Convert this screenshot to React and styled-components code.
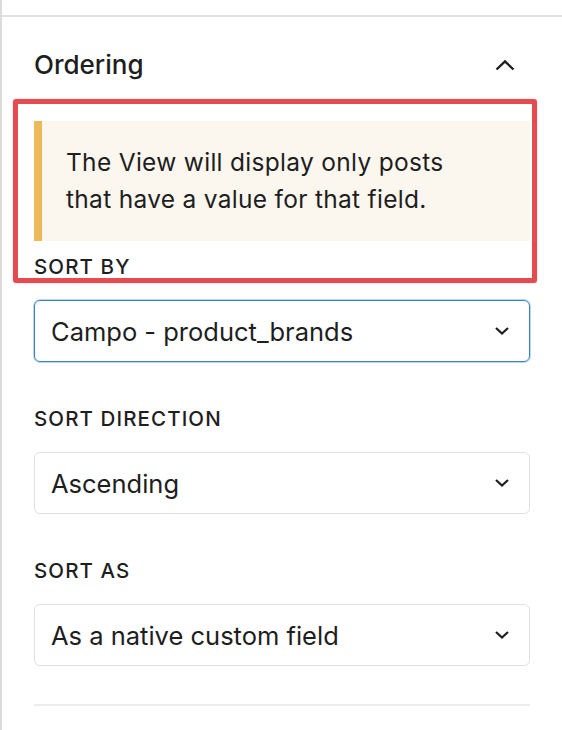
import React from "react";
import styled, { createGlobalStyle } from "styled-components";

const Global = createGlobalStyle`
  html, body { margin: 0; padding: 0; background: #fff; }
  body { font-family: Inter, "Noto Sans", sans-serif; color: #1e1e1e; }
  * { box-sizing: border-box; }
`;

const Sidebar = styled.div`
  position: relative;
  width: 562px;
  min-height: 730px;
  border-left: 2px solid #dcdcdc;
  background: #fff;
`;

const PrevPanel = styled.div`
  height: 17px;
  border-bottom: 2px solid #e2e2e2;
`;

const Panel = styled.section`
  padding: 33px 32px 0 32px;
`;

const Header = styled.div`
  display: flex;
  align-items: center;
  justify-content: space-between;
  height: 30px;
  padding-right: 14px;
`;

const Title = styled.h2`
  margin: 0;
  font-size: 26px;
  line-height: 30px;
  font-weight: 500;
  color: #1e1e1e;
`;

const Notice = styled.div`
  margin-top: 41px;
  background: #fbf7ef;
  border-left: 8px solid #ebb95a;
  padding: 23px 24px;
  font-size: 24.5px;
  letter-spacing: 0.3px;
  line-height: 37px;
  color: #1e1e1e;
`;

const Field = styled.div`
  margin-top: ${(p) => p.$top}px;
  display: flex;
  flex-direction: column;
`;

const Label = styled.div`
  font-size: 20.5px;
  line-height: 24px;
  letter-spacing: 1.1px;
  font-weight: 500;
  text-transform: uppercase;
  color: #1e1e1e;
  margin-bottom: 21px;
`;

const Select = styled.div`
  height: 62px;
  border: 1.5px solid ${(p) => (p.$focused ? "#3582c4" : "#e0e0e0")};
  box-shadow: ${(p) => (p.$focused ? "0 0 0 1px #bcd6ee" : "none")};
  border-radius: 6px;
  display: flex;
  align-items: center;
  justify-content: space-between;
  padding: 0 20px 0 16px;
  font-size: 25.5px;
  color: #1e1e1e;
`;

const Divider = styled.div`
  margin-top: 38px;
  height: 2px;
  background: #ececec;
`;

const Highlight = styled.div`
  position: absolute;
  left: 11px;
  top: 99px;
  width: 524px;
  height: 184px;
  border: 5px solid #e54b4f;
  border-radius: 3px;
  box-shadow: 0 0 2px rgba(229, 75, 79, 0.35);
  pointer-events: none;
`;

const ChevronUp = () => (
  <svg width="22" height="12" viewBox="0 0 22 12" fill="none">
    <path d="M2.5 10.5 L11 2.5 L19.5 10.5" stroke="#1e1e1e" strokeWidth="2.4" />
  </svg>
);

const ChevronDown = () => (
  <svg width="14" height="8" viewBox="0 0 14 8" fill="none">
    <path d="M1 1 L7 6.5 L13 1" stroke="#1e1e1e" strokeWidth="2.2" />
  </svg>
);

const fields = [
  { label: "Sort by", value: "Campo - product_brands", focused: true, top: 14 },
  { label: "Sort direction", value: "Ascending", top: 45 },
  { label: "Sort as", value: "As a native custom field", top: 45 },
];

export default function App() {
  return (
    <>
      <Global />
      <Sidebar>
        <PrevPanel />
        <Panel>
          <Header>
            <Title>Ordering</Title>
            <ChevronUp />
          </Header>
          <Notice>
            The View will display only posts
            <br />
            that have a value for that field.
          </Notice>
          {fields.map((f) => (
            <Field key={f.label} $top={f.top}>
              <Label>{f.label}</Label>
              <Select $focused={f.focused}>
                <span>{f.value}</span>
                <ChevronDown />
              </Select>
            </Field>
          ))}
          <Divider />
        </Panel>
        <Highlight />
      </Sidebar>
    </>
  );
}
